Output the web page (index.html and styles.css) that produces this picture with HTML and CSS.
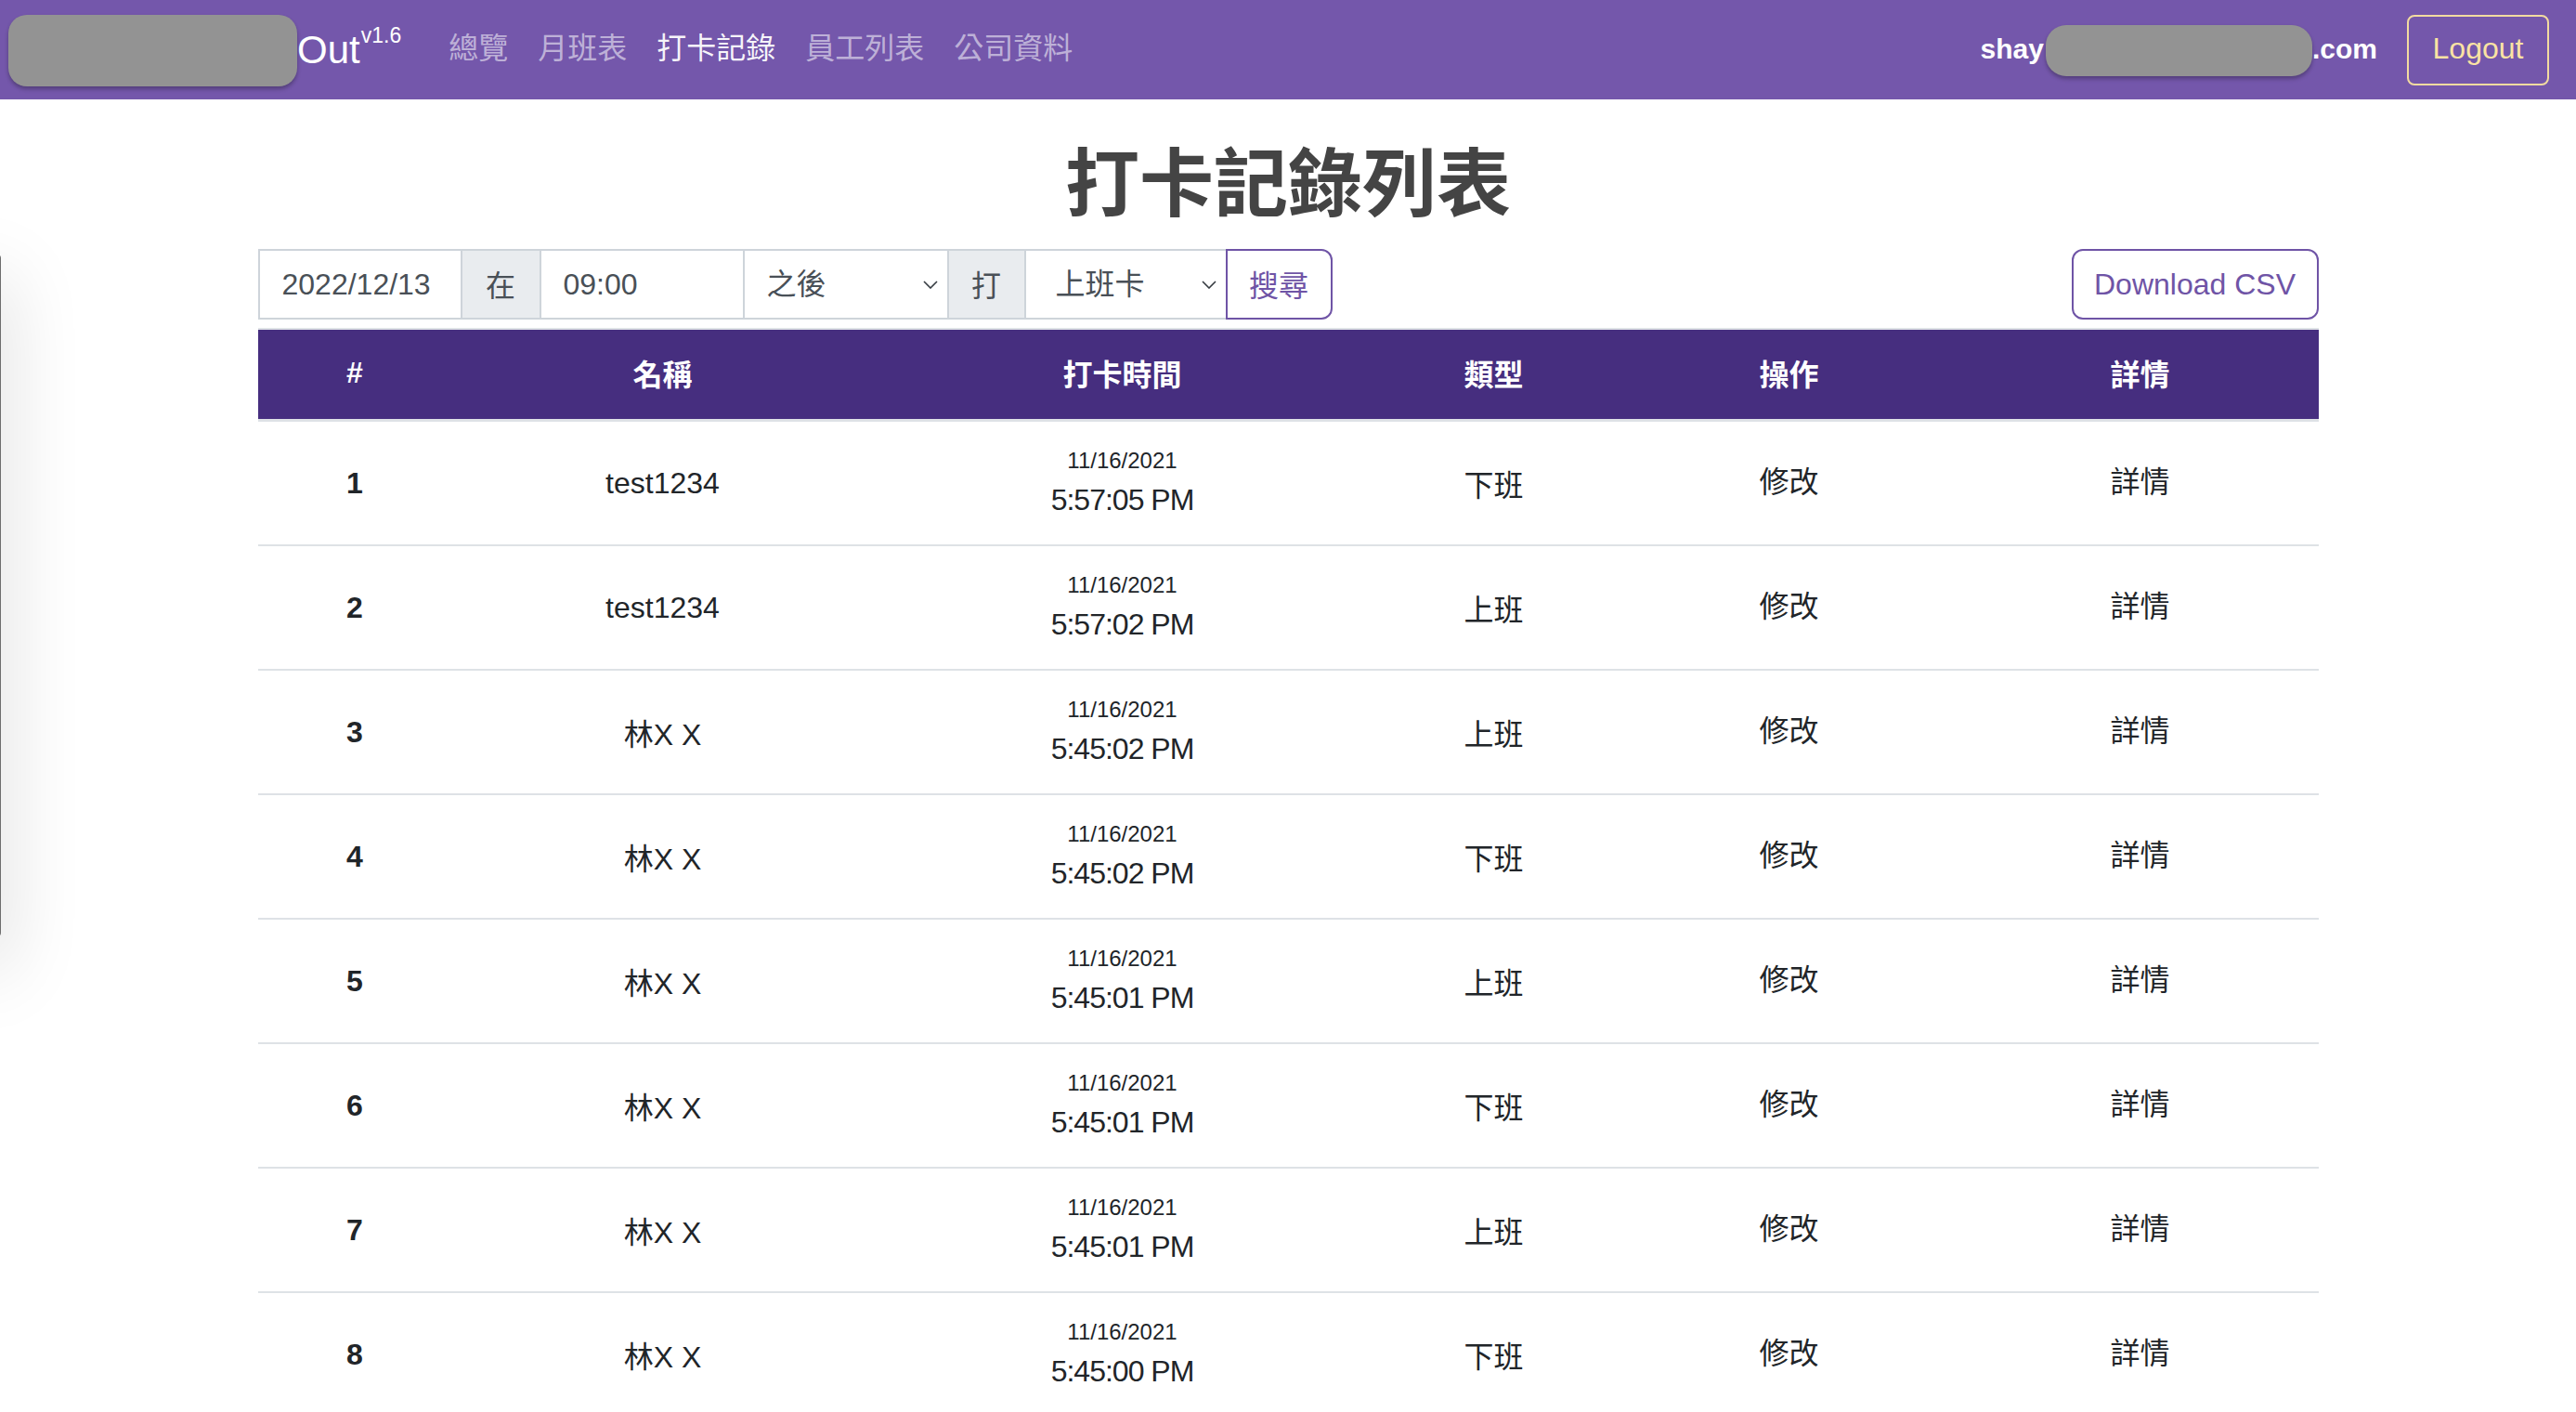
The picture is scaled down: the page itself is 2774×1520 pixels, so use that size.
FILE: index.html
```html
<!DOCTYPE html>
<html lang="zh-Hant">
<head>
<meta charset="utf-8">
<title>打卡記錄列表</title>
<link rel="stylesheet" href="styles.css">
</head>
<body>
<div class="backdrop-window"></div>
<nav class="navbar">
  <div class="brand"><span class="redact redact-logo"></span><span class="brand-text">Out<sup>v1.6</sup></span></div>
  <ul class="nav">
    <li><a class="nav-link">總覽</a></li>
    <li><a class="nav-link">月班表</a></li>
    <li><a class="nav-link active">打卡記錄</a></li>
    <li><a class="nav-link">員工列表</a></li>
    <li><a class="nav-link">公司資料</a></li>
  </ul>
  <div class="nav-right">
    <span class="user">shay<span class="redact redact-mail"></span>.com</span>
    <button class="btn-logout">Logout</button>
  </div>
</nav>
<main class="container">
  <h1 class="title">打卡記錄列表</h1>
  <div class="toolbar">
    <div class="input-group">
      <input class="field field-date" value="2022/12/13">
      <span class="addon">在</span>
      <input class="field field-time" value="09:00">
      <select class="field select select-when"><option>之後</option></select>
      <span class="addon addon-narrow">打</span>
      <select class="field select select-type"><option>上班卡</option></select>
      <button class="btn-search">搜尋</button>
    </div>
    <button class="btn-outline">Download CSV</button>
  </div>
  <table class="records">
    <colgroup>
      <col class="c-num"><col class="c-name"><col class="c-time"><col class="c-type"><col class="c-op"><col class="c-detail">
    </colgroup>
    <thead>
      <tr><th>#</th><th>名稱</th><th>打卡時間</th><th>類型</th><th>操作</th><th>詳情</th></tr>
    </thead>
    <tbody>
      <tr><td class="num">1</td><td>test1234</td><td><div class="stamp-date">11/16/2021</div><div class="stamp-time">5:57:05 PM</div></td><td>下班</td><td><span class="action">修改</span></td><td><span class="action">詳情</span></td></tr>
      <tr><td class="num">2</td><td>test1234</td><td><div class="stamp-date">11/16/2021</div><div class="stamp-time">5:57:02 PM</div></td><td>上班</td><td><span class="action">修改</span></td><td><span class="action">詳情</span></td></tr>
      <tr><td class="num">3</td><td>林X X</td><td><div class="stamp-date">11/16/2021</div><div class="stamp-time">5:45:02 PM</div></td><td>上班</td><td><span class="action">修改</span></td><td><span class="action">詳情</span></td></tr>
      <tr><td class="num">4</td><td>林X X</td><td><div class="stamp-date">11/16/2021</div><div class="stamp-time">5:45:02 PM</div></td><td>下班</td><td><span class="action">修改</span></td><td><span class="action">詳情</span></td></tr>
      <tr><td class="num">5</td><td>林X X</td><td><div class="stamp-date">11/16/2021</div><div class="stamp-time">5:45:01 PM</div></td><td>上班</td><td><span class="action">修改</span></td><td><span class="action">詳情</span></td></tr>
      <tr><td class="num">6</td><td>林X X</td><td><div class="stamp-date">11/16/2021</div><div class="stamp-time">5:45:01 PM</div></td><td>下班</td><td><span class="action">修改</span></td><td><span class="action">詳情</span></td></tr>
      <tr><td class="num">7</td><td>林X X</td><td><div class="stamp-date">11/16/2021</div><div class="stamp-time">5:45:01 PM</div></td><td>上班</td><td><span class="action">修改</span></td><td><span class="action">詳情</span></td></tr>
      <tr><td class="num">8</td><td>林X X</td><td><div class="stamp-date">11/16/2021</div><div class="stamp-time">5:45:00 PM</div></td><td>下班</td><td><span class="action">修改</span></td><td><span class="action">詳情</span></td></tr>
    </tbody>
  </table>
</main>
</body>
</html>
```

FILE: styles.css
```css
html, body {
  margin: 0;
  padding: 0;
}
body {
  position: relative;
  background: #fff;
  color: #212529;
  font-family: "Liberation Sans", "Noto Sans CJK TC", sans-serif;
  font-size: 32px;
  overflow: hidden;
  height: 1520px;
}

/* window peeking in from the left edge */
.backdrop-window {
  position: absolute;
  left: -40px;
  top: 274px;
  width: 39px;
  height: 734px;
  background: #fff;
  border-right: 2px solid #6d6d6d;
  border-radius: 0 4px 4px 0;
  box-shadow: 0 30px 80px 8px rgba(0, 0, 0, 0.13);
}

/* navbar */
.navbar {
  display: flex;
  align-items: center;
  height: 107px;
  box-sizing: border-box;
  padding: 0 29px 0 9px;
  background: #7457ab;
}
.brand {
  display: flex;
  align-items: center;
  margin-right: 35px;
  color: #fff;
}
.redact {
  display: inline-block;
  background: #939393;
  box-shadow: 0 3px 4px rgba(0, 0, 0, 0.28);
}
.redact-logo {
  width: 311px;
  height: 77px;
  border-radius: 20px;
  margin-top: 2px;
}
.brand-text {
  font-size: 42px;
  line-height: 1;
}
.brand-text sup {
  font-size: 23px;
  vertical-align: top;
  position: relative;
  top: -6px;
  margin-left: 1px;
}
.nav {
  display: flex;
  list-style: none;
  margin: 0;
  padding: 0 0 2px;
}
.nav-link {
  display: block;
  padding: 0 16px;
  font-size: 32px;
  line-height: 1.2;
  color: rgba(255, 255, 255, 0.55);
  text-decoration: none;
}
.nav-link.active {
  color: rgba(255, 255, 255, 0.95);
}
.nav-right {
  margin-left: auto;
  display: flex;
  align-items: center;
}
.user {
  display: flex;
  align-items: center;
  font-size: 30px;
  font-weight: 700;
  color: #fff;
  padding-bottom: 2px;
}
.redact-mail {
  width: 287px;
  height: 55px;
  border-radius: 22px;
  margin: 4px 0 0 2px;
}
.btn-logout {
  margin-left: 32px;
  width: 153px;
  height: 76px;
  box-sizing: border-box;
  border: 2px solid #f2dba0;
  border-radius: 8px;
  background: transparent;
  color: #fbe3a3;
  font-family: "Liberation Sans", sans-serif;
  font-size: 32px;
  padding: 0 0 2px;
}

/* main */
.container {
  width: 2219px;
  margin: 0 auto;
}
.title {
  margin: 44px 0 21px;
  font-size: 80px;
  line-height: 96px;
  font-weight: 700;
  text-align: center;
  color: #444;
}
.toolbar {
  display: flex;
  justify-content: space-between;
  align-items: center;
  height: 76px;
}
.input-group {
  display: flex;
  height: 76px;
}
.field,
.addon,
.btn-search {
  box-sizing: border-box;
  height: 76px;
  margin: 0;
  border: 2px solid #ced4da;
  border-right: 0;
  font-family: "Liberation Sans", "Noto Sans CJK TC", sans-serif;
  font-size: 32px;
  color: #495057;
  background: #fff;
  outline: none;
}
.field {
  padding: 0 0 0 24px;
}
.field-date { width: 218px; }
.field-time { width: 219px; }
.addon {
  display: flex;
  align-items: center;
  justify-content: center;
  width: 85px;
  background: #e9ecef;
  padding-bottom: 3px;
}
.addon-narrow { width: 83px; }
.select {
  -webkit-appearance: none;
  appearance: none;
  background-image: url("data:image/svg+xml,%3Csvg xmlns='http://www.w3.org/2000/svg' viewBox='0 0 16 9'%3E%3Cpath d='M1 1l7 7 7-7' fill='none' stroke='%23343a40' stroke-width='1.6'/%3E%3C/svg%3E");
  background-repeat: no-repeat;
  background-size: 16px 9px;
  background-position: right 10px center;
}
.select-when { width: 220px; }
.select-type { width: 217px; padding-left: 32px; }
.btn-search {
  width: 115px;
  border: 2px solid #6f54a6;
  border-radius: 0 12px 12px 0;
  color: #6f54a6;
  padding: 0 0 3px;
}
.btn-outline {
  box-sizing: border-box;
  width: 266px;
  height: 76px;
  border: 2px solid #6f54a6;
  border-radius: 12px;
  background: #fff;
  color: #6f54a6;
  font-family: "Liberation Sans", sans-serif;
  font-size: 32px;
  padding: 0;
}

/* table */
.records {
  width: 100%;
  margin-top: 9px;
  border-collapse: separate;
  border-spacing: 0;
  table-layout: fixed;
}
.c-num { width: 209px; }
.c-name { width: 454px; }
.c-time { width: 536px; }
.c-type { width: 264px; }
.c-op { width: 372px; }
.c-detail { width: 384px; }
.records th {
  height: 101px;
  padding: 0 0 4px;
  box-sizing: border-box;
  background: #462e7f;
  color: #fff;
  font-size: 32px;
  font-weight: 700;
  text-align: center;
  border-top: 2px solid #dee2e6;
  border-bottom: 3px solid #dee2e6;
}
.records td {
  height: 132px;
  padding: 0;
  text-align: center;
  vertical-align: middle;
  border-bottom: 2px solid #dee2e6;
  color: #212529;
}
.records td.num {
  font-weight: 700;
}
.stamp-date {
  font-size: 24px;
  line-height: 36px;
}
.stamp-time {
  font-size: 32px;
  line-height: 48px;
  letter-spacing: -1px;
}
.action {
  display: inline-block;
  padding-bottom: 8px;
}
```
